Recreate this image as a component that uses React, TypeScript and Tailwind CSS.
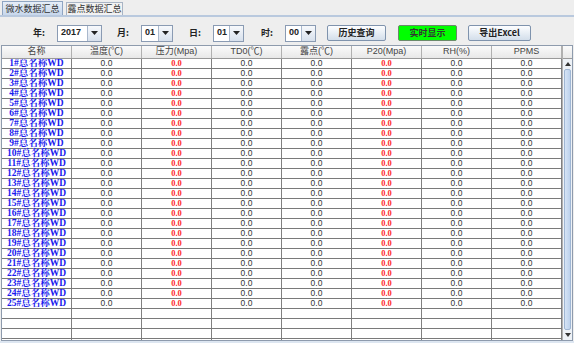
import React from "react";

const cjk = '"Noto Sans CJK SC", "Liberation Sans", sans-serif';

function Combo({ value, w }: { value: string; w: string }) {
  return (
    <div className={`flex h-[17px] ${w} border border-[#8a9bb3] bg-white`}>
      <div className="flex-1 flex items-center pl-[3px] text-[9px] font-bold text-[#222]" style={{ fontFamily: '"Liberation Sans", sans-serif' }}>
        {value}
      </div>
      <div className="w-[14px] flex items-center justify-center border-l border-[#a9b8cc] bg-gradient-to-b from-[#f7f9fc] to-[#d7e0ec]">
        <svg width="7" height="4" viewBox="0 0 7 4"><polygon points="0,0 7,0 3.5,4" fill="#222" /></svg>
      </div>
    </div>
  );
}

function Btn({ label, w, green }: { label: string; w: string; green?: boolean }) {
  return (
    <div
      className={`flex h-[16px] ${w} items-center justify-center rounded-[2px] border text-[9px] font-bold ${
        green
          ? "border-[#6a8a6a] bg-[#00ff00] text-[#333]"
          : "border-[#7f93ad] bg-gradient-to-b from-[#fdfeff] to-[#d3deea] text-[#222]"
      }`}
      style={{ fontFamily: cjk }}
    >
      {label}
    </div>
  );
}

const headers = ["名称", "温度(℃)", "压力(Mpa)", "TD0(℃)", "露点(℃)", "P20(Mpa)", "RH(%)", "PPMS"];

export default function App() {
  const rows = Array.from({ length: 30 }, (_, i) => i);
  return (
    <div className="w-[574px] h-[343px] bg-[#eeeeee] flex flex-col overflow-hidden" style={{ fontFamily: cjk }}>
      {/* tabs */}
      <div className="h-[15px] flex items-end pl-[2px] gap-[3px] shrink-0">
        <div className="h-[14px] w-[61px] flex items-center justify-center border border-b-0 border-[#8fa5c2] bg-gradient-to-b from-[#e6eef8] to-[#c7d7ec] text-[9px] text-[#333]">
          微水数据汇总
        </div>
        <div className="h-[13px] w-[57px] flex items-center justify-center border border-b-0 border-[#a8b4c4] bg-[#f2f2f2] text-[9px] text-[#333]">
          露点数据汇总
        </div>
      </div>
      <div className="flex-1 flex flex-col border-t-[2px] border-[#b9c9de] bg-[#eeeeee]">
        {/* toolbar */}
        <div className="mt-[7px] h-[18px] flex items-center text-[9px] font-bold text-[#222] shrink-0">
          <span className="ml-[33px] w-[24px]">年:</span>
          <Combo value="2017" w="w-[45px]" />
          <span className="ml-[15px] w-[24px]">月:</span>
          <Combo value="01" w="w-[32px]" />
          <span className="ml-[16px] w-[24px]">日:</span>
          <Combo value="01" w="w-[31px]" />
          <span className="ml-[17px] w-[24px]">时:</span>
          <Combo value="00" w="w-[31px]" />
          <div className="ml-[11px]"><Btn label="历史查询" w="w-[59px]" /></div>
          <div className="ml-[12px]"><Btn label="实时显示" w="w-[59px]" green /></div>
          <div className="ml-[11px]"><Btn label="导出Excel" w="w-[63px]" /></div>
        </div>
        {/* table */}
        <div className="mt-[3px] ml-[1px] w-[572px] h-[296px] border border-[#8e9bad] flex overflow-hidden bg-white">
          <div className="w-[560px] flex flex-col">
            <div className="h-[13px] flex shrink-0 bg-gradient-to-b from-[#fafafa] to-[#e8e8e8] border-b border-[#9a9a9a]">
              {headers.map((h, i) => (
                <div key={i} className="w-[70px] shrink-0 flex items-center justify-center border-r border-[#b0b0b0] text-[9px] text-[#444]" style={{ fontFamily: '"Liberation Sans", "Noto Sans CJK SC", sans-serif' }}>
                  {h}
                </div>
              ))}
            </div>
            <div className="flex-1 overflow-hidden">
              {rows.map((r) => (
                <div key={r} className="h-[10px] flex border-b border-[#7a7a7a]">
                  {headers.map((_, c) => (
                    <div key={c} className="w-[70px] shrink-0 h-full flex items-center justify-center border-r border-[#808080] leading-none">
                      {r < 25 ? (
                        c === 0 ? (
                          <span className="text-[9.5px] font-bold text-[#1a1aee] whitespace-nowrap" style={{ fontFamily: '"Liberation Serif", "Noto Serif CJK SC", "Noto Sans CJK SC", serif' }}>
                            {r + 1}#总名称WD
                          </span>
                        ) : c === 2 || c === 5 ? (
                          <span className="text-[8.5px] font-bold text-[#ff2a2a]" style={{ fontFamily: '"Liberation Serif", serif' }}>0.0</span>
                        ) : (
                          <span className="text-[8.5px] text-[#333]" style={{ fontFamily: '"Liberation Sans", sans-serif' }}>0.0</span>
                        )
                      ) : null}
                    </div>
                  ))}
                </div>
              ))}
            </div>
          </div>
          {/* scrollbar */}
          <div className="w-[11px] flex flex-col border-l border-[#b0b0b0]">
            <div className="h-[13px] bg-gradient-to-b from-[#fafafa] to-[#e8e8e8] border-b border-[#9a9a9a] shrink-0" />
            <div className="flex-1 flex flex-col bg-[#eef2f7]">
              <div className="h-[10px] flex items-center justify-center shrink-0">
                <svg width="6" height="4" viewBox="0 0 6 4"><polygon points="0,4 6,4 3,0" fill="#333" /></svg>
              </div>
              <div className="flex-1 mx-[1px] rounded-[2px] border border-[#9fb6d3] bg-gradient-to-r from-[#d6e4f5] to-[#bcd1ec]" />
              <div className="h-[10px] flex items-center justify-center shrink-0">
                <svg width="6" height="4" viewBox="0 0 6 4"><polygon points="0,0 6,0 3,4" fill="#333" /></svg>
              </div>
            </div>
          </div>
        </div>
        <div className="flex-1 bg-[#dde6f1]" />
      </div>
    </div>
  );
}
